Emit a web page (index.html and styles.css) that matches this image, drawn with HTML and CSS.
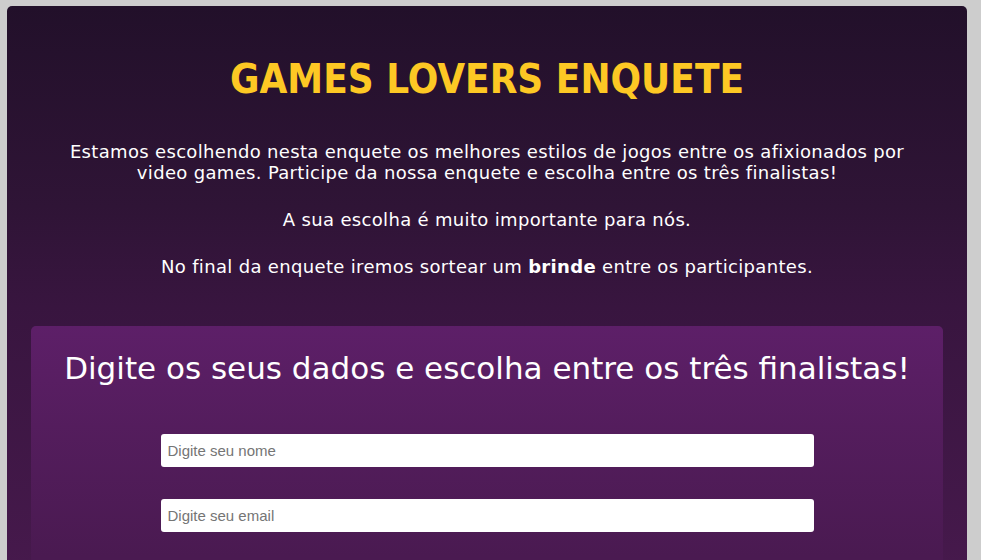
FILE: index.html
```html
<!DOCTYPE html>
<html lang="pt-BR">
<head>
<meta charset="utf-8">
<title>Games Lovers Enquete</title>
<link rel="stylesheet" href="styles.css">
</head>
<body>
<main class="page">
  <header class="intro">
    <h1 class="title">GAMES LOVERS ENQUETE</h1>
    <p class="text">Estamos escolhendo nesta enquete os melhores estilos de jogos entre os afixionados por video games. Participe da nossa enquete e escolha entre os três finalistas!</p>
    <p class="text">A sua escolha é muito importante para nós.</p>
    <p class="text">No final da enquete iremos sortear um <strong>brinde</strong> entre os participantes.</p>
  </header>
  <section class="card">
    <h2 class="card-title">Digite os seus dados e escolha entre os três finalistas!</h2>
    <form class="form">
      <input class="field" type="text" placeholder="Digite seu nome">
      <input class="field" type="email" placeholder="Digite seu email">
    </form>
  </section>
</main>
</body>
</html>
```
FILE: styles.css
```css
html, body {
  margin: 0;
  padding: 0;
  background: #cdcdcd;
}
body {
  padding: 6px 14px 0 7px;
  font-family: "DejaVu Sans", sans-serif;
}
.page {
  width: 960px;
  min-height: 640px;
  border-radius: 5px;
  background: linear-gradient(180deg, #22102a 0px, #2f1436 200px, #38153f 300px, #46194c 560px);
  padding: 50px 24px 0;
  box-sizing: border-box;
}
.intro {
  text-align: center;
  color: #ffffff;
}
.title {
  margin: 0 0 39px;
  font-family: "DejaVu Sans Condensed", "DejaVu Sans", sans-serif;
  font-weight: bold;
  font-size: 40px;
  line-height: 46px;
  color: #fdc824;
}
.text {
  margin: 0 0 26px;
  font-size: 18px;
  letter-spacing: 0.33px;
  line-height: 21px;
  padding: 0 20px;
}
.text:last-child {
  margin-bottom: 0;
}
.text strong {
  font-weight: bold;
}
.card {
  margin-top: 49px;
  border-radius: 5px;
  background: linear-gradient(180deg, #5d1f68 0px, #541d5d 100px, #4a1a51 230px);
  padding: 22px 0 80px;
  color: #fff;
}
.card-title {
  margin: 0 0 46px;
  text-align: center;
  font-weight: normal;
  font-size: 31px;
  line-height: 40px;
}
.form {
  display: flex;
  flex-direction: column;
  align-items: center;
  gap: 32px;
}
.field {
  width: 653px;
  height: 33px;
  box-sizing: border-box;
  border: none;
  border-radius: 3px;
  background: #fff;
  padding: 0 8px 0 7px;
  font-family: "Liberation Sans", Arial, sans-serif;
  font-size: 15px;
  color: #333;
  outline: none;
}
.field::placeholder {
  color: #757575;
}
```
